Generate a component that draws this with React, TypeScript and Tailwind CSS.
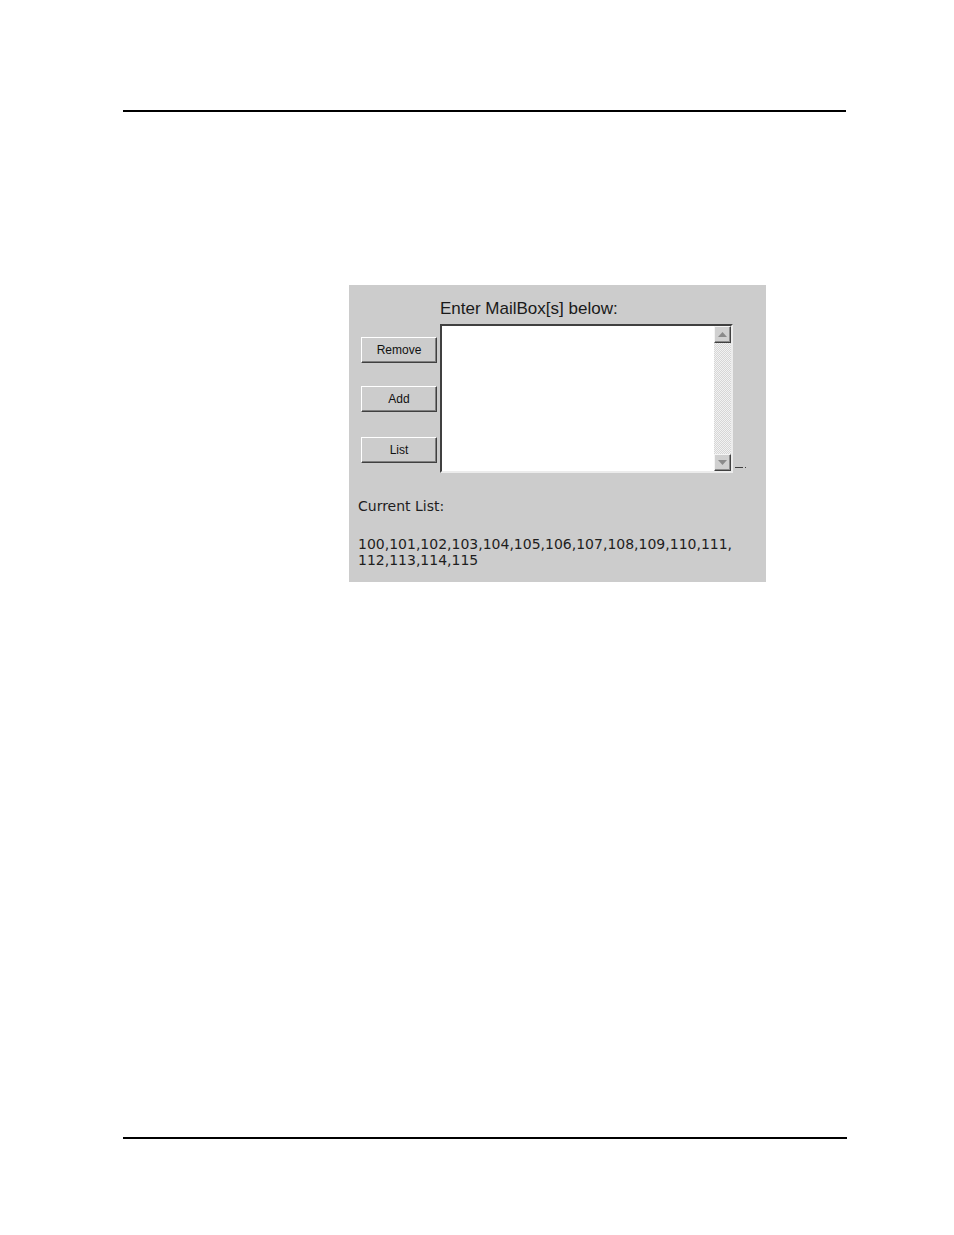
import React from 'react';

const sans = { fontFamily: '"Liberation Sans", Arial, sans-serif' };

const WinButton: React.FC<{ label: string; className?: string }> = ({ label, className }) => (
  <button
    className={`w-[76px] h-[26px] bg-[#cccccc] border border-t-white border-l-white border-b-[#404040] border-r-[#404040] shadow-[inset_-1px_-1px_0_#808080] text-[12px] leading-none text-[#111] ${className ?? ''}`}
    style={sans}
  >
    {label}
  </button>
);

const ScrollArrow: React.FC<{ up?: boolean }> = ({ up }) => (
  <div className="w-[17px] h-[17px] bg-[#d0d0d0] border border-t-[#f4f4f4] border-l-[#f4f4f4] border-b-[#404040] border-r-[#404040] shadow-[inset_-1px_-1px_0_#8a8a8a] flex items-center justify-center">
    <svg width="9" height="5" viewBox="0 0 9 5">
      {up ? <path d="M4.5 0 L9 5 L0 5 Z" fill="#8a8a8a" /> : <path d="M0 0 L9 0 L4.5 5 Z" fill="#8a8a8a" />}
    </svg>
  </div>
);

const App: React.FC = () => {
  return (
    <div className="w-[954px] h-[1235px] bg-white pt-[110px]">
      <div className="ml-[123px] w-[723px] h-[2px] bg-black" />

      <div className="ml-[349px] mt-[173px] w-[417px] h-[297px] bg-[#cccccc] pt-[14px]">
        <div className="ml-[91px] h-[25px] text-[17px] leading-[20px] text-[#1a1a1a]" style={sans}>
          Enter MailBox[s] below:
        </div>

        <div className="flex pl-[12px]">
          <div className="w-[76px] pt-[13px] flex flex-col">
            <WinButton label="Remove" />
            <WinButton label="Add" className="mt-[23px]" />
            <WinButton label="List" className="mt-[25px]" />
          </div>

          <div className="ml-[3px] w-[293px] h-[149px] border-2 border-t-[#404040] border-l-[#404040] border-b-[#ececec] border-r-[#ececec] bg-white flex justify-end">
            <div className="w-[17px] flex flex-col">
              <ScrollArrow up />
              <div className="flex-1 bg-[repeating-conic-gradient(#f2f2f2_0_25%,#d6d6d6_0_50%)] bg-[length:2px_2px]" />
              <ScrollArrow />
            </div>
          </div>

          <div className="flex items-end pb-[4px] ml-[2px]">
            <svg width="12" height="2" viewBox="0 0 12 2">
              <rect x="0" y="0" width="8" height="1" fill="#404040" />
              <rect x="10" y="0" width="1" height="1" fill="#404040" />
            </svg>
          </div>
        </div>

        <div
          className="mt-[25px] pl-[9px] text-[14px] leading-[16px] text-[#1e1e1e]"
          style={{ fontFamily: '"DejaVu Sans", Verdana, sans-serif' }}
        >
          <div>Current List:</div>
          <div className="mt-[22px]">100,101,102,103,104,105,106,107,108,109,110,111,</div>
          <div>112,113,114,115</div>
        </div>
      </div>

      <div className="ml-[123px] mt-[555px] w-[724px] h-[2px] bg-black" />
    </div>
  );
};

export default App;
